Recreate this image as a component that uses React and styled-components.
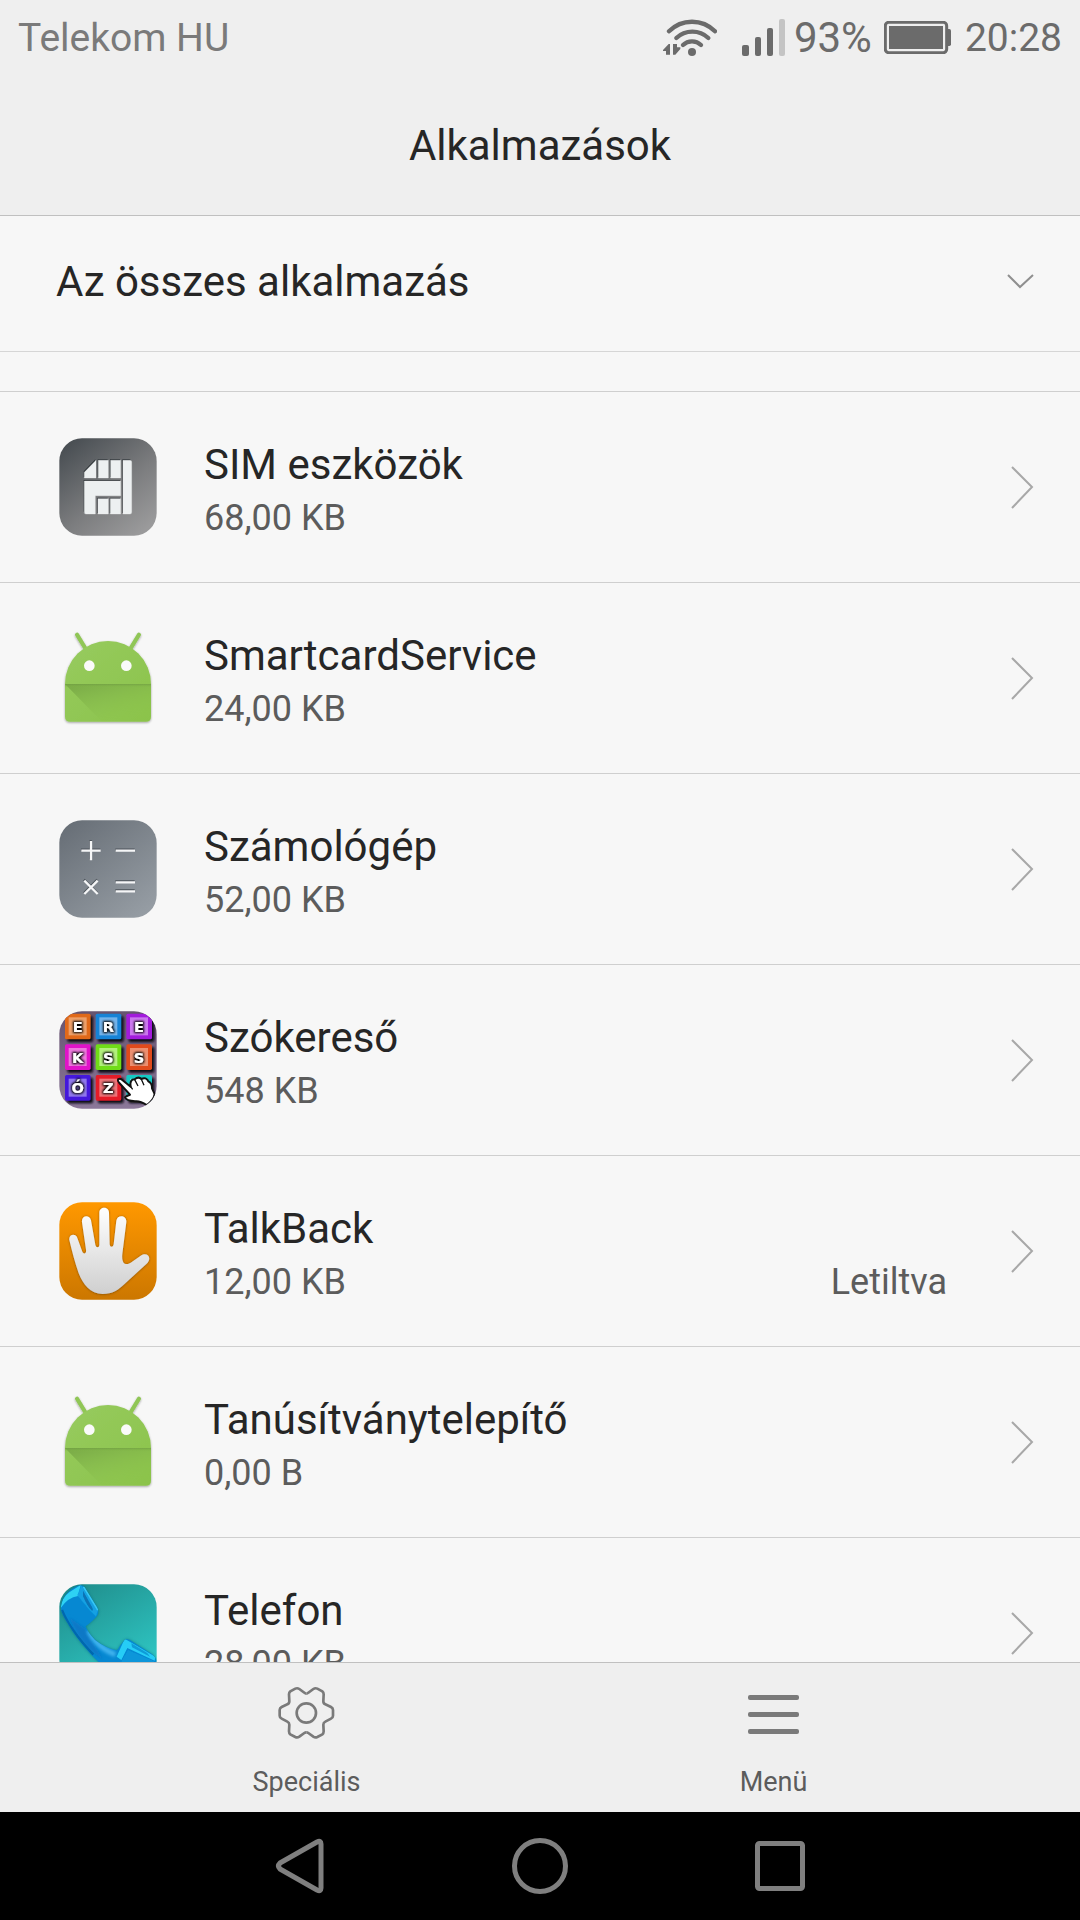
import React from "react";
import styled, { createGlobalStyle } from "styled-components";

const GlobalStyle = createGlobalStyle`
  *, *::before, *::after { box-sizing: border-box; }
  body {
    margin: 0;
    background: #f7f7f7;
    color: #262626;
    font-family: Roboto, "Noto Sans", sans-serif;
  }
  button, select {
    margin: 0;
    border: 0;
    padding: 0;
    background: none;
    color: inherit;
    font: inherit;
  }
`;

const Screen = styled.div`
  display: flex;
  flex-direction: column;
  height: 100vh;
  overflow: hidden;
`;

const StatusBar = styled.div`
  display: flex;
  align-items: center;
  justify-content: space-between;
  flex: none;
  height: 75px;
  padding: 0 18px;
  background: #efefef;
  color: #6b6b6b;
  font-size: 39px;
  line-height: 48px;
`;

const Carrier = styled.span`
  color: #7a7a7a;
`;

const StatusGroup = styled.div`
  display: flex;
  align-items: center;
  gap: ${(p) => p.$gap}px;
`;

const Percent = styled.span`
  margin-right: 12px;
  font-size: 42px;
`;

const Clock = styled.span`
  margin-left: 14px;
`;

const Glyph = styled.svg`
  display: block;
  flex: none;
  width: ${(p) => p.$w}px;
  height: ${(p) => p.$h}px;
`;

const TitleBar = styled.header`
  display: flex;
  align-items: center;
  justify-content: center;
  flex: none;
  height: 141px;
  padding-top: 2px;
  border-bottom: 1px solid #c0c0c0;
  background: #efefef;
`;

const Title = styled.h1`
  margin: 0;
  font-size: 42px;
  font-weight: 400;
  line-height: 56px;
`;

const Filter = styled.label`
  display: grid;
  align-items: center;
  flex: none;
  height: 136px;
  padding-bottom: 4px;
  border-bottom: 1px solid #d6d6d6;

  > * { grid-area: 1 / 1; }
  > svg {
    justify-self: end;
    margin-right: 46px;
    pointer-events: none;
  }
`;

const FilterSelect = styled.select`
  appearance: none;
  width: 100%;
  height: 100%;
  padding: 0 96px 0 56px;
  font-size: 42px;
  line-height: 56px;
`;

const AppList = styled.ul`
  flex: 1;
  min-height: 0;
  margin: 39px 0 0;
  padding: 0;
  border-top: 1px solid #cfcfcf;
  list-style: none;
  overflow-y: auto;
  scrollbar-width: none;
`;

const AppRow = styled.button`
  display: flex;
  align-items: center;
  width: 100%;
  height: 191px;
  padding: 0 45px 0 59px;
  border-bottom: 1px solid #cfcfcf;
  text-align: left;
`;

const AppText = styled.span`
  flex: 1;
  min-width: 0;
  margin: 0 64px 0 47px;
  padding-top: 2px;
`;

const AppName = styled.span`
  display: block;
  font-size: 42px;
  line-height: 60px;
`;

const AppMeta = styled.span`
  display: flex;
  justify-content: space-between;
  color: #5c5c5c;
  font-size: 36px;
  line-height: 46px;
`;

const ActionBar = styled.footer`
  display: flex;
  flex: none;
  height: 150px;
  padding: 0 73px;
  border-top: 1px solid #c0c0c0;
  background: #efefef;
`;

const Action = styled.button`
  display: flex;
  flex: 1;
  flex-direction: column;
  align-items: center;
  gap: 23px;
  padding-top: 20px;
  color: #5c5c5c;
  font-size: 27px;
  line-height: 32px;
`;

const NavBar = styled.nav`
  display: flex;
  flex: none;
  height: 108px;
  padding: 0 180px;
  background: #000;
`;

const NavButton = styled.button`
  display: flex;
  flex: 1;
  align-items: center;
  justify-content: center;
`;

function WifiIcon() {
  return (
    <Glyph $w={54} $h={37} viewBox="66 54 162 111" aria-hidden="true">
      <g fill="none" stroke="#6b6b6b" strokeWidth="13" strokeLinecap="round">
        <path d="M84 91A97 97 0 0 1 222 91" />
        <path d="M106 111A70 70 0 0 1 202 111" />
        <path d="M126 132A39 39 0 0 1 180 132" />
      </g>
      <circle cx="153" cy="153" r="12" fill="#6b6b6b" />
      <path fill="#6b6b6b" d="M66 147L83 129H87V161H75V150H66ZM96 129H108V139H118V144L103 161H96Z" />
    </Glyph>
  );
}

function SignalIcon() {
  return (
    <Glyph $w={43} $h={37} viewBox="303 54 129 111" aria-hidden="true">
      <g fill="#6b6b6b">
        <rect x="303" y="132" width="21" height="33" rx="6" />
        <rect x="342" y="108" width="18" height="57" rx="6" />
        <rect x="378" y="81" width="18" height="84" rx="6" />
      </g>
      <rect x="414" y="54" width="18" height="111" rx="6" fill="#c4c4c4" />
    </Glyph>
  );
}

function BatteryIcon() {
  return (
    <Glyph $w={67} $h={33} viewBox="732 63 201 99" aria-hidden="true">
      <rect x="736" y="67" width="184" height="91" rx="10" fill="none" stroke="#6b6b6b" strokeWidth="9" />
      <rect x="747" y="78" width="162" height="69" fill="#6b6b6b" />
      <path d="M923 87H928Q933 87 933 92V133Q933 138 928 138H923Z" fill="#6b6b6b" />
    </Glyph>
  );
}

const SIM_PARTS =
  "M168 121V174H133V157ZM175 121H205V174H175ZM212 121H242V174H212ZM249 121H270Q275 121 275 126V277Q275 282 270 282H249ZM133 183H242V227H166V282H138Q133 282 133 277ZM174 236H205V282H174ZM211 236H242V282H211Z";

function SimIcon() {
  return (
    <Glyph $w={98} $h={98} viewBox="57 54 294 294" aria-hidden="true">
      <defs>
        <linearGradient id="simBack" x1="0" y1="0" x2="0.8" y2="1">
          <stop offset="0" stopColor="#42484d" />
          <stop offset="0.6" stopColor="#7b7c7e" />
          <stop offset="1" stopColor="#9a9a9b" />
        </linearGradient>
      </defs>
      <rect x="58" y="55" width="292" height="292" rx="68" fill="url(#simBack)" />
      <path d={SIM_PARTS} fill="#2f3438" transform="translate(-2 -3)" />
      <path d={SIM_PARTS} fill="#edf0f1" stroke="#edf0f1" strokeWidth="1" />
    </Glyph>
  );
}

function AndroidIcon({ id }) {
  return (
    <Glyph $w={98} $h={98} viewBox="57 627 294 294" aria-hidden="true">
      <defs>
        <linearGradient id={id + "Body"} x1="0" y1="0" x2="1" y2="1">
          <stop offset="0" stopColor="#97cb5f" />
          <stop offset="1" stopColor="#8bc34a" />
        </linearGradient>
        <linearGradient id={id + "Fold"} x1="0" y1="0" x2="0.6" y2="1">
          <stop offset="0" stopColor="#77a746" />
          <stop offset="1" stopColor="#8bc34a" stopOpacity="0" />
        </linearGradient>
        <linearGradient id={id + "Edge"} x1="0" y1="0" x2="0" y2="1">
          <stop offset="0" stopColor="#6f9c42" stopOpacity="0.7" />
          <stop offset="1" stopColor="#8bc34a" stopOpacity="0" />
        </linearGradient>
        <filter id={id + "Shadow"} x="-10%" y="-10%" width="120%" height="120%">
          <feDropShadow dx="0" dy="3" stdDeviation="2.5" floodOpacity="0.35" />
        </filter>
      </defs>
      <g filter={`url(#${id}Shadow)`}>
        <path d="M111 644L138 688M297 644L270 688" stroke="#90c656" strokeWidth="12" strokeLinecap="round" />
        <path d="M75 792A129 129 0 0 1 333 792V890Q333 905 318 905H90Q75 905 75 890Z" fill={`url(#${id}Body)`} />
      </g>
      <path d="M75 792H333V890Q333 905 318 905H186Z" fill={`url(#${id}Fold)`} />
      <rect x="75" y="792" width="258" height="12" fill={`url(#${id}Edge)`} />
      <circle cx="148" cy="737" r="16" fill="#fafafa" />
      <circle cx="259" cy="737" r="16" fill="#fafafa" />
    </Glyph>
  );
}

function CalculatorIcon() {
  const signs = "M124 152H182M153 123V181M227 152H285M133 242L173 282M173 242L133 282M227 247H285M227 274H285";
  return (
    <Glyph $w={98} $h={98} viewBox="57 60 294 294" aria-hidden="true">
      <defs>
        <linearGradient id="calcBack" x1="0" y1="0" x2="0.8" y2="1">
          <stop offset="0" stopColor="#656c74" />
          <stop offset="1" stopColor="#959ca3" />
        </linearGradient>
      </defs>
      <rect x="58" y="61" width="292" height="292" rx="68" fill="url(#calcBack)" />
      <path d={signs} transform="translate(-1 -3)" fill="none" stroke="#4c535a" strokeWidth="7" />
      <path d={signs} fill="none" stroke="#f5f6f7" strokeWidth="7" />
    </Glyph>
  );
}

const TILES = [
  { x: 75, y: 641, letter: "E", edge: "#e0691a", face: "#eda06a" },
  { x: 167, y: 641, letter: "R", edge: "#1783d6", face: "#74b3ea" },
  { x: 259, y: 641, letter: "E", edge: "#a21bdc", face: "#cb77ee" },
  { x: 75, y: 733, letter: "K", edge: "#e014c8", face: "#ee78de" },
  { x: 167, y: 733, letter: "S", edge: "#70dc18", face: "#b2f07c" },
  { x: 259, y: 733, letter: "S", edge: "#e04a1c", face: "#ec8f70" },
  { x: 75, y: 825, letter: "Ó", edge: "#4418dc", face: "#8f78ec" },
  { x: 167, y: 825, letter: "Z", edge: "#e41c28", face: "#ee7479" },
  { x: 259, y: 825, letter: "", edge: "#14c9c4", face: "#5fe8e0" },
];

function WordSearchIcon() {
  return (
    <Glyph $w={98} $h={98} viewBox="57 633 294 294" aria-hidden="true">
      <defs>
        <clipPath id="wordClip">
          <rect x="58" y="634" width="292" height="292" rx="68" />
        </clipPath>
        <linearGradient id="wordBack" x1="0" y1="0" x2="0" y2="1">
          <stop offset="0" stopColor="#65536f" />
          <stop offset="1" stopColor="#8b7799" />
        </linearGradient>
        <filter id="wordBlur" x="-20%" y="-20%" width="140%" height="140%">
          <feGaussianBlur stdDeviation="2.5" />
        </filter>
        <filter id="wordGlow" x="-40%" y="-40%" width="180%" height="180%">
          <feMorphology in="SourceAlpha" operator="dilate" radius="3" result="wide" />
          <feGaussianBlur in="wide" stdDeviation="3" result="soft" />
          <feMerge>
            <feMergeNode in="soft" />
            <feMergeNode in="SourceGraphic" />
          </feMerge>
        </filter>
      </defs>
      <g clipPath="url(#wordClip)">
        <rect x="57" y="633" width="294" height="294" fill="url(#wordBack)" />
        {TILES.map((t) => (
          <g key={`${t.x}-${t.y}`}>
            <rect x={t.x + 7} y={t.y + 8} width="77" height="77" rx="6" fill="#0c0812" filter="url(#wordBlur)" />
            <rect x={t.x} y={t.y} width="77" height="77" rx="5" fill={t.edge} />
            <rect x={t.x + 11} y={t.y + 11} width="54" height="54" fill={t.face} />
            <text
              x={t.x + 38}
              y={t.y + 55}
              textAnchor="middle"
              fontFamily="'DejaVu Sans', sans-serif"
              fontWeight="700"
              fontSize="44"
              fill="#fff"
              filter="url(#wordGlow)"
            >
              {t.letter}
            </text>
          </g>
        ))}
        <path
          d="M234 838Q240 834 246 839L272 860Q268 838 284 838Q296 828 304 837Q318 830 325 844Q337 850 336 865L344 882Q341 902 320 915Q300 902 285 904Q258 902 255 892Q262 886 270 884L238 849Q232 843 234 838Z"
          fill="#fff"
          stroke="#111"
          strokeWidth="6"
          strokeLinejoin="round"
        />
        <path d="M272 860L278 868M284 839L294 858M304 838L312 856" stroke="#111" strokeWidth="4" fill="none" />
      </g>
    </Glyph>
  );
}

function TalkBackIcon() {
  return (
    <Glyph $w={98} $h={98} viewBox="57 66 294 294" aria-hidden="true">
      <defs>
        <linearGradient id="talkBack" x1="0" y1="0" x2="0" y2="1">
          <stop offset="0" stopColor="#ff9800" />
          <stop offset="1" stopColor="#cc7700" />
        </linearGradient>
        <linearGradient id="talkHand" x1="0" y1="0" x2="0" y2="1">
          <stop offset="0" stopColor="#ffffff" />
          <stop offset="1" stopColor="#cfcfcf" />
        </linearGradient>
        <filter id="talkShadow" x="-10%" y="-10%" width="120%" height="120%">
          <feDropShadow dx="0" dy="1" stdDeviation="3" floodColor="#5a3500" floodOpacity="0.7" />
        </filter>
      </defs>
      <rect x="58" y="67" width="292" height="292" rx="68" fill="url(#talkBack)" />
      <path
        d="M88 180C85 162 108 158 112 174L126 212C129 224 140 223 138 209L126 127C123 105 149 102 153 121L166 194C168 204 178 204 178 194V98C178 78 207 78 207 98L209 193C210 203 219 203 221 193L229 122C232 102 261 105 259 126L247 222C244 251 257 258 272 248L302 227C322 214 338 233 320 251L257 309C234 331 218 342 188 342C150 342 130 314 116 280C105 249 96 214 88 180Z"
        fill="url(#talkHand)"
        filter="url(#talkShadow)"
      />
    </Glyph>
  );
}

const HANDSET =
  "M112 78Q128 72 134 82L171 142Q179 156 171 168Q160 182 137 199Q143 218 165 240Q196 264 230 271Q236 266 238 260L254 240Q260 235 270 240L334 281Q350 292 350 310V366H260Q190 325 150 280Q105 230 82 188Q60 156 63 138Q66 116 82 99Q96 84 112 78Z";

function PhoneIcon() {
  return (
    <Glyph $w={98} $h={98} viewBox="57 72 294 294" aria-hidden="true">
      <defs>
        <clipPath id="phoneClip">
          <rect x="58" y="73" width="292" height="292" rx="68" />
        </clipPath>
        <clipPath id="handsetClip">
          <path d={HANDSET} />
        </clipPath>
        <linearGradient id="phoneBack" x1="0.2" y1="0" x2="0.8" y2="1">
          <stop offset="0" stopColor="#208f8d" />
          <stop offset="1" stopColor="#30cbc8" />
        </linearGradient>
        <filter id="phoneSoft" x="-20%" y="-20%" width="140%" height="140%">
          <feGaussianBlur stdDeviation="4" />
        </filter>
        <filter id="phoneTrim" x="-20%" y="-20%" width="140%" height="140%">
          <feGaussianBlur stdDeviation="2" />
        </filter>
      </defs>
      <g clipPath="url(#phoneClip)">
        <rect x="57" y="72" width="294" height="294" fill="url(#phoneBack)" />
        <path d={HANDSET} fill="#045f78" opacity="0.6" filter="url(#phoneSoft)" />
        <path d={HANDSET} fill="#0688d2" />
        <g clipPath="url(#handsetClip)">
          <path d="M62 144Q66 112 88 97L122 75L114 108Q84 112 62 144Z" fill="#2fd2f4" filter="url(#phoneTrim)" />
          <path d="M112 106L124 76L174 150L168 170L150 152Z" fill="#12a0e2" filter="url(#phoneTrim)" />
          <path d="M129 92L157 143Q160 152 156 152Q142 140 129 108Z" fill="#0873b4" filter="url(#phoneTrim)" />
          <path d="M131 80L174 150" stroke="#38c8f4" strokeWidth="6" filter="url(#phoneTrim)" />
          <path d="M136 206Q120 196 88 172Q110 232 150 270L190 300Q160 250 136 206Z" fill="#0a78c6" filter="url(#phoneSoft)" />
          <path d="M146 212Q170 262 226 284" fill="none" stroke="#3fb2ee" strokeWidth="15" filter="url(#phoneSoft)" />
          <path d="M66 150Q90 210 160 284" fill="none" stroke="#0568ae" strokeWidth="7" filter="url(#phoneTrim)" />
          <path d="M254 236L346 290L344 302L262 264L244 300L230 290Z" fill="#26cdf6" filter="url(#phoneTrim)" />
          <path d="M274 250L322 279L330 290L276 262Z" fill="#109cd8" filter="url(#phoneTrim)" />
          <path d="M264 270L342 304V366H230L246 300Z" fill="#0a96da" filter="url(#phoneTrim)" />
        </g>
      </g>
    </Glyph>
  );
}

function ChevronRight() {
  return (
    <Glyph $w={24} $h={43} viewBox="0 0 24 43" aria-hidden="true">
      <path d="M1 1L21 21L1 42" fill="none" stroke="#a8a8a8" strokeWidth="2" />
    </Glyph>
  );
}

function ChevronDown() {
  return (
    <Glyph $w={27} $h={15} viewBox="0 0 27 15" aria-hidden="true">
      <path d="M1 1L13 13L26 1" fill="none" stroke="#8f8f8f" strokeWidth="2" />
    </Glyph>
  );
}

function GearIcon() {
  const half =
    "M798 401Q795 401 792 398L777 387Q771 383 765 386L750 394Q746 397 746 403L747 424Q747 431 741 433L724 441Q718 444 718 450V467Q718 473 724 476L741 485Q747 488 747 494L746 514Q746 520 750 523L765 531Q771 534 777 530L792 519Q795 517 798 517";
  return (
    <Glyph $w={60} $h={60} viewBox="710 369 180 180" aria-hidden="true">
      <g fill="none" stroke="#7a7a7a" strokeWidth="8">
        <path d={half} />
        <path d={half} transform="translate(1596 0) scale(-1 1)" />
        <circle cx="798" cy="459" r="29" />
      </g>
    </Glyph>
  );
}

function MenuIcon() {
  return (
    <Glyph $w={60} $h={60} viewBox="0 0 60 60" aria-hidden="true">
      <g fill="#7a7a7a">
        <rect x="4" y="12" width="51" height="5" rx="2" />
        <rect x="4" y="29" width="51" height="5" rx="2" />
        <rect x="4" y="46" width="51" height="5" rx="2" />
      </g>
    </Glyph>
  );
}

const APPS = [
  { name: "SIM eszközök", size: "68,00 KB", icon: <SimIcon /> },
  { name: "SmartcardService", size: "24,00 KB", icon: <AndroidIcon id="smartcard" /> },
  { name: "Számológép", size: "52,00 KB", icon: <CalculatorIcon /> },
  { name: "Szókereső", size: "548 KB", icon: <WordSearchIcon /> },
  { name: "TalkBack", size: "12,00 KB", icon: <TalkBackIcon />, state: "Letiltva" },
  { name: "Tanúsítványtelepítő", size: "0,00 B", icon: <AndroidIcon id="certificate" /> },
  { name: "Telefon", size: "28,00 KB", icon: <PhoneIcon /> },
];

export default function App() {
  return (
    <Screen>
      <GlobalStyle />
      <StatusBar>
        <Carrier>Telekom HU</Carrier>
        <StatusGroup $gap={0}>
          <StatusGroup $gap={25}>
            <WifiIcon />
            <StatusGroup $gap={9}>
              <SignalIcon />
              <Percent>93%</Percent>
            </StatusGroup>
          </StatusGroup>
          <BatteryIcon />
          <Clock>20:28</Clock>
        </StatusGroup>
      </StatusBar>
      <TitleBar>
        <Title>Alkalmazások</Title>
      </TitleBar>
      <Filter>
        <FilterSelect aria-label="Az összes alkalmazás">
          <option>Az összes alkalmazás</option>
        </FilterSelect>
        <ChevronDown />
      </Filter>
      <AppList>
        {APPS.map((app) => (
          <li key={app.name}>
            <AppRow type="button">
              {app.icon}
              <AppText>
                <AppName>{app.name}</AppName>
                <AppMeta>
                  <span>{app.size}</span>
                  {app.state && <span>{app.state}</span>}
                </AppMeta>
              </AppText>
              <ChevronRight />
            </AppRow>
          </li>
        ))}
      </AppList>
      <ActionBar>
        <Action type="button">
          <GearIcon />
          Speciális
        </Action>
        <Action type="button">
          <MenuIcon />
          Menü
        </Action>
      </ActionBar>
      <NavBar>
        <NavButton type="button" aria-label="Vissza">
          <Glyph $w={60} $h={60} viewBox="0 0 60 60" aria-hidden="true">
            <path
              d="M51 8Q51 4 47 6L10 27Q7 30 10 33L47 54Q51 56 51 52Z"
              fill="none"
              stroke="#7f7f7f"
              strokeWidth="5"
              strokeLinejoin="round"
            />
          </Glyph>
        </NavButton>
        <NavButton type="button" aria-label="Kezdőképernyő">
          <Glyph $w={60} $h={60} viewBox="0 0 60 60" aria-hidden="true">
            <circle cx="30" cy="30" r="25.5" fill="none" stroke="#7f7f7f" strokeWidth="5" />
          </Glyph>
        </NavButton>
        <NavButton type="button" aria-label="Legutóbbiak">
          <Glyph $w={60} $h={60} viewBox="0 0 60 60" aria-hidden="true">
            <rect x="7.5" y="7.5" width="45" height="45" rx="2" fill="none" stroke="#7f7f7f" strokeWidth="5" />
          </Glyph>
        </NavButton>
      </NavBar>
    </Screen>
  );
}
